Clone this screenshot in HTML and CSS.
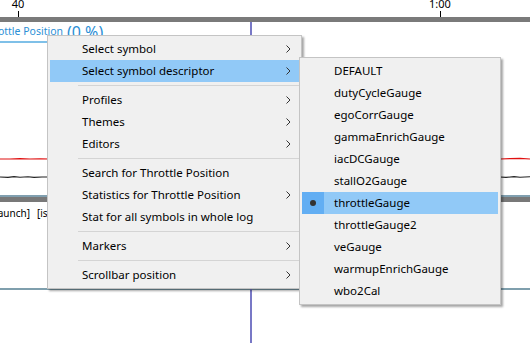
FILE: index.html
```html
<!DOCTYPE html>
<html lang="en">
  <head>
    <meta charset="UTF-8" />
    <meta name="viewport" content="width=device-width, initial-scale=1.0" />
    <title>Log viewer</title>
    <link rel="stylesheet" href="styles.css">
  </head>
  <body>
    <main class="viewer">
      <!-- chart behind the popup -->
      <svg class="plot" width="530" height="343" viewBox="0 0 530 343">
        <text class="plot__tick-label" x="18" y="8" text-anchor="middle">40</text>
        <text class="plot__tick-label" x="440" y="8" text-anchor="middle">1:00</text>
        <line x1="18.5" y1="11" x2="18.5" y2="17" stroke="#000" />
        <line x1="440.5" y1="11" x2="440.5" y2="17" stroke="#000" />
        <rect x="0" y="17" width="530" height="5" fill="#7a7a7a" />

        <text class="plot__title" x="63" y="35" text-anchor="end">Throttle Position</text>
        <text class="plot__value" x="67" y="38">(0 %)</text>
        <rect x="0" y="41" width="60" height="2" fill="#7fc0e8" />

        <polyline points="0,159 10,159 20,158.6 30,159 40,158.8 50,159 500,159 510,158.6 520,158.4 530,159"
          fill="none" stroke="#e01010" stroke-width="1.2" />
        <polyline points="0,177 8,177.4 14,176.6 20,177.2 28,176.8 34,177.4 42,177 50,177 500,177 506,177.4 514,176.6 520,177.2 530,176.8"
          fill="none" stroke="#222" stroke-width="1.1" />

        <rect x="0" y="195" width="530" height="2" fill="#809faf" />
        <rect x="0" y="197" width="530" height="5" fill="#787878" />
        <text class="plot__tags" x="30" y="217" text-anchor="end">[launch]</text>
        <text class="plot__tags" x="37" y="217">[is</text>

        <rect x="0" y="288" width="530" height="2" fill="#7f9fad" />
        <rect x="250" y="22" width="2" height="321" fill="#7878c6" />
      </svg>

      <div class="menu menu--main">
        <div class="menu__item">Select symbol<svg class="menu__arrow" width="5" height="8" viewBox="0 0 5 8"><polyline points="0.5,0.5 4,4 0.5,7.5" /></svg></div>
        <div class="menu__item is-active">Select symbol descriptor<svg class="menu__arrow" width="5" height="8" viewBox="0 0 5 8"><polyline points="0.5,0.5 4,4 0.5,7.5" /></svg></div>
        <div class="menu__sep"></div>
        <div class="menu__item">Profiles<svg class="menu__arrow" width="5" height="8" viewBox="0 0 5 8"><polyline points="0.5,0.5 4,4 0.5,7.5" /></svg></div>
        <div class="menu__item">Themes<svg class="menu__arrow" width="5" height="8" viewBox="0 0 5 8"><polyline points="0.5,0.5 4,4 0.5,7.5" /></svg></div>
        <div class="menu__item">Editors<svg class="menu__arrow" width="5" height="8" viewBox="0 0 5 8"><polyline points="0.5,0.5 4,4 0.5,7.5" /></svg></div>
        <div class="menu__sep"></div>
        <div class="menu__item">Search for Throttle Position</div>
        <div class="menu__item">Statistics for Throttle Position<svg class="menu__arrow" width="5" height="8" viewBox="0 0 5 8"><polyline points="0.5,0.5 4,4 0.5,7.5" /></svg></div>
        <div class="menu__item">Stat for all symbols in whole log</div>
        <div class="menu__sep"></div>
        <div class="menu__item">Markers<svg class="menu__arrow" width="5" height="8" viewBox="0 0 5 8"><polyline points="0.5,0.5 4,4 0.5,7.5" /></svg></div>
        <div class="menu__sep"></div>
        <div class="menu__item">Scrollbar position<svg class="menu__arrow" width="5" height="8" viewBox="0 0 5 8"><polyline points="0.5,0.5 4,4 0.5,7.5" /></svg></div>
      </div>

      <div class="menu menu--sub">
        <div class="menu__item"><span class="menu__check"></span><span class="menu__label">DEFAULT</span></div>
        <div class="menu__item"><span class="menu__check"></span><span class="menu__label">dutyCycleGauge</span></div>
        <div class="menu__item"><span class="menu__check"></span><span class="menu__label">egoCorrGauge</span></div>
        <div class="menu__item"><span class="menu__check"></span><span class="menu__label">gammaEnrichGauge</span></div>
        <div class="menu__item"><span class="menu__check"></span><span class="menu__label">iacDCGauge</span></div>
        <div class="menu__item"><span class="menu__check"></span><span class="menu__label">stallO2Gauge</span></div>
        <div class="menu__item is-active"><span class="menu__check"><span class="menu__dot"></span></span><span class="menu__label">throttleGauge</span></div>
        <div class="menu__item"><span class="menu__check"></span><span class="menu__label">throttleGauge2</span></div>
        <div class="menu__item"><span class="menu__check"></span><span class="menu__label">veGauge</span></div>
        <div class="menu__item"><span class="menu__check"></span><span class="menu__label">warmupEnrichGauge</span></div>
        <div class="menu__item"><span class="menu__check"></span><span class="menu__label">wbo2Cal</span></div>
      </div>
    </main>
  </body>
</html>
```

FILE: styles.css
```css
* {
  margin: 0;
  padding: 0;
  box-sizing: border-box;
}

body {
  background-color: #fff;
  font-family: "Segoe UI", "Noto Sans", sans-serif;
  color: #000;
  overflow: hidden;
}

.viewer {
  position: relative;
  width: 530px;
  height: 343px;
}

.plot {
  display: block;
}

.plot__tick-label {
  font-family: "Noto Sans", sans-serif;
  font-size: 11px;
  fill: #000;
}

.plot__title {
  font-family: "Noto Sans", sans-serif;
  font-size: 10.5px;
  fill: #2b8fd6;
}

.plot__value {
  font-family: "Noto Sans", sans-serif;
  font-size: 16px;
  fill: #2b8fd6;
}

.plot__tags {
  font-family: "Noto Sans", sans-serif;
  font-size: 10px;
  fill: #000;
}

/* popup menus */
.menu {
  position: absolute;
  display: flex;
  flex-direction: column;
  background-color: #f0f0f0;
  border: 1px solid #c4c4c4;
  padding: 2px;
  box-shadow: 2px 2px 2px rgba(0, 0, 0, 0.35);
  font-size: 11.5px;
}

.menu--main {
  left: 47px;
  top: 35px;
  width: 255px;
}

.menu--sub {
  left: 299px;
  top: 57px;
  width: 202px;
}

.menu__item {
  display: flex;
  align-items: center;
  height: 22px;
  padding-left: 32px;
  padding-right: 8px;
  padding-bottom: 1px;
  white-space: nowrap;
}

.menu--sub .menu__item {
  padding-left: 0;
  padding-bottom: 0;
}

.menu__item.is-active {
  background-color: #91c9f7;
}

.menu__arrow {
  margin-left: auto;
  margin-top: 1px;
  fill: none;
  stroke: #333;
  stroke-width: 1;
}

.menu__check {
  display: flex;
  align-items: center;
  justify-content: center;
  width: 22px;
  height: 100%;
  margin-right: 10px;
}

.menu__label {
  margin-bottom: 2px;
}

.is-active .menu__check {
  background-color: #62aef3;
}

.menu__dot {
  width: 6px;
  height: 6px;
  border-radius: 50%;
  background-color: #333;
}

.menu__sep {
  height: 7px;
  margin-left: 28px;
  padding-top: 3px;
}

.menu__sep::before {
  content: '';
  display: block;
  height: 1px;
  background-color: #d4d4d4;
}
```
